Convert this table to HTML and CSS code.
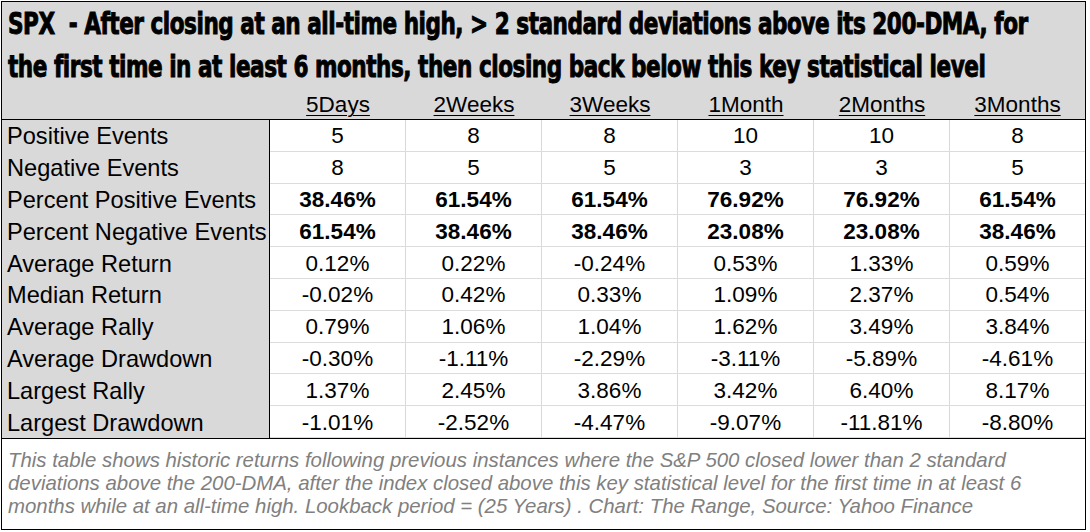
FILE: index.html
```html
<!DOCTYPE html>
<html>
<head>
<meta charset="utf-8">
<link rel="stylesheet" href="styles.css">
</head>
<body>
<div class="sheet">
  <div class="title">
    <div class="title-line">SPX&nbsp;&nbsp;- After closing at an all-time high, &gt; 2 standard deviations above its 200-DMA, for</div>
    <div class="title-line">the first time in at least 6 months, then closing back below this key statistical level</div>
  </div>
  <div class="grid">
    <div class="hd label"></div>
    <div class="hd"><span>5Days</span></div>
    <div class="hd"><span>2Weeks</span></div>
    <div class="hd"><span>3Weeks</span></div>
    <div class="hd"><span>1Month</span></div>
    <div class="hd"><span>2Months</span></div>
    <div class="hd"><span>3Months</span></div>

    <div class="lb">Positive Events</div>
    <div class="c">5</div><div class="c">8</div><div class="c">8</div><div class="c">10</div><div class="c">10</div><div class="c">8</div>

    <div class="lb">Negative Events</div>
    <div class="c">8</div><div class="c">5</div><div class="c">5</div><div class="c">3</div><div class="c">3</div><div class="c">5</div>

    <div class="lb">Percent Positive Events</div>
    <div class="c b">38.46%</div><div class="c b">61.54%</div><div class="c b">61.54%</div><div class="c b">76.92%</div><div class="c b">76.92%</div><div class="c b">61.54%</div>

    <div class="lb">Percent Negative Events</div>
    <div class="c b">61.54%</div><div class="c b">38.46%</div><div class="c b">38.46%</div><div class="c b">23.08%</div><div class="c b">23.08%</div><div class="c b">38.46%</div>

    <div class="lb">Average Return</div>
    <div class="c">0.12%</div><div class="c">0.22%</div><div class="c">-0.24%</div><div class="c">0.53%</div><div class="c">1.33%</div><div class="c">0.59%</div>

    <div class="lb">Median Return</div>
    <div class="c">-0.02%</div><div class="c">0.42%</div><div class="c">0.33%</div><div class="c">1.09%</div><div class="c">2.37%</div><div class="c">0.54%</div>

    <div class="lb">Average Rally</div>
    <div class="c">0.79%</div><div class="c">1.06%</div><div class="c">1.04%</div><div class="c">1.62%</div><div class="c">3.49%</div><div class="c">3.84%</div>

    <div class="lb">Average Drawdown</div>
    <div class="c">-0.30%</div><div class="c">-1.11%</div><div class="c">-2.29%</div><div class="c">-3.11%</div><div class="c">-5.89%</div><div class="c">-4.61%</div>

    <div class="lb">Largest Rally</div>
    <div class="c">1.37%</div><div class="c">2.45%</div><div class="c">3.86%</div><div class="c">3.42%</div><div class="c">6.40%</div><div class="c">8.17%</div>

    <div class="lb">Largest Drawdown</div>
    <div class="c">-1.01%</div><div class="c">-2.52%</div><div class="c">-4.47%</div><div class="c">-9.07%</div><div class="c">-11.81%</div><div class="c">-8.80%</div>
  </div>
  <div class="note">This table shows historic returns following previous instances where the S&amp;P 500 closed lower than 2 standard deviations above the 200-DMA, after the index closed above this key statistical level for the first time in at least 6 months while at an all-time high. Lookback period = (25 Years) . Chart: The Range, Source: Yahoo Finance</div>
</div>
</body>
</html>
```

FILE: styles.css
```css
html, body {
  margin: 0;
  padding: 0;
  background: #ffffff;
}

.sheet {
  margin: 1px 0 0 1px;
  width: 1083px;
  height: 527px;
  border: 1px solid #000;
  display: flex;
  flex-direction: column;
  font-family: "Liberation Sans", Arial, sans-serif;
  color: #000;
  overflow: hidden;
}

.title {
  background: #d9d9d9;
  height: 88px;
  padding-left: 6px;
  display: flex;
  flex-direction: column;
}

.title-line {
  font-family: "DejaVu Sans", sans-serif;
  font-stretch: condensed;
  font-weight: bold;
  font-size: 30px;
  line-height: 44px;
  letter-spacing: -0.6px;
  -webkit-text-stroke: 0.9px #000;
  white-space: nowrap;
  transform: scaleX(0.8);
  transform-origin: left center;
}

.title-line + .title-line {
  margin-top: -1px;
}

.grid {
  display: grid;
  grid-template-columns: 268px repeat(5, 136px) 135px;
  grid-template-rows: 30px repeat(10, 31.8px);
}

.hd {
  background: #d9d9d9;
  border-bottom: 1px solid #000;
  font-size: 22.5px;
  display: flex;
  align-items: flex-start;
  justify-content: center;
  line-height: 30px;
}

.hd span {
  text-decoration: underline;
  text-decoration-thickness: 1px;
  text-underline-offset: 3px;
}

.lb {
  background: #d9d9d9;
  border-right: 1px solid #000;
  font-size: 23.6px;
  padding-left: 5px;
  padding-top: 2px;
  display: flex;
  align-items: center;
  white-space: nowrap;
}

.c {
  border-right: 1px solid #d9d9d9;
  border-bottom: 1px solid #dcdcdc;
  font-size: 22.5px;
  padding-top: 2px;
  display: flex;
  align-items: center;
  justify-content: center;
}

.c:nth-child(7n) {
  border-right: none;
}

.b {
  font-weight: bold;
}

.note {
  border-top: 1px solid #000;
  flex: 1;
  padding: 10px 6px 0 6px;
  font-style: italic;
  color: #808080;
  font-size: 20.4px;
  line-height: 23px;
}
```
